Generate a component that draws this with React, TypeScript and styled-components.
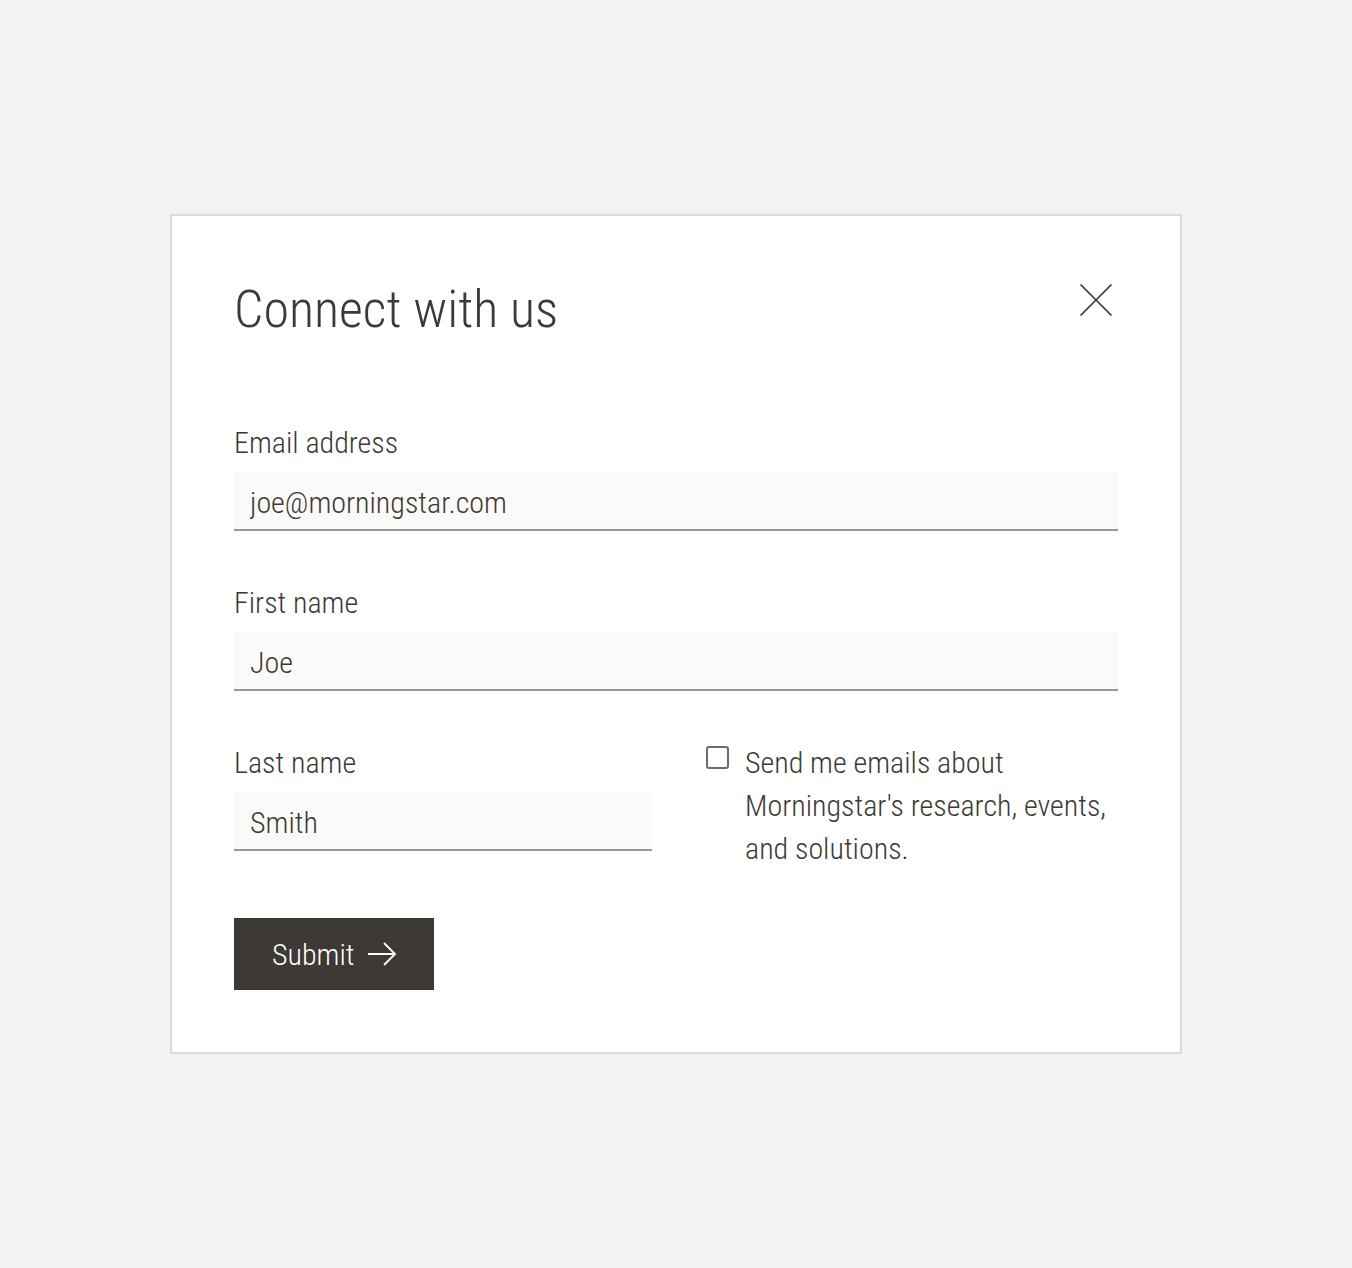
import styled, { createGlobalStyle } from "styled-components";

const GlobalStyle = createGlobalStyle`
  html, body {
    margin: 0;
    padding: 0;
    background: #f2f2f2;
  }
  body {
    font-family: "Roboto Condensed", "Open Sans", sans-serif;
    font-weight: 300;
    color: #3d3935;
  }
`;

const Page = styled.div`
  display: flex;
  align-items: center;
  justify-content: center;
  min-height: 1268px;
`;

const Card = styled.form`
  box-sizing: border-box;
  width: 1012px;
  padding: 62px;
  background: #ffffff;
  border: 2px solid #dcd9d6;
`;

const Header = styled.div`
  display: flex;
  justify-content: space-between;
  align-items: flex-start;
  margin-bottom: 83px;
`;

const Title = styled.h2`
  margin: 0;
  font-size: 52px;
  line-height: 64px;
  font-weight: 300;
  color: #3d3935;
`;

const CloseButton = styled.button`
  width: 44px;
  height: 44px;
  padding: 0;
  border: none;
  background: transparent;
  display: flex;
  align-items: center;
  justify-content: center;
  cursor: pointer;
`;

const Field = styled.div`
  display: flex;
  flex-direction: column;
  margin-bottom: 54px;
`;

const Label = styled.label`
  font-size: 30px;
  line-height: 36px;
  margin-bottom: 11px;
  color: #3d3935;
`;

const Input = styled.input`
  box-sizing: border-box;
  height: 59px;
  padding: 4px 16px 0;
  border: none;
  border-bottom: 2px solid #9b9a91;
  background: #fbfaf8;
  font-family: inherit;
  font-weight: 300;
  font-size: 30px;
  color: #3d3935;
  outline: none;
`;

const Row = styled.div`
  display: grid;
  grid-template-columns: 418px 1fr;
  column-gap: 54px;
  margin-bottom: 48px;
`;

const RowField = styled(Field)`
  margin-bottom: 0;
`;

const CheckLabel = styled.label`
  display: flex;
  align-items: flex-start;
  gap: 16px;
  margin-top: -4px;
  font-size: 30px;
  line-height: 43px;
  color: #3d3935;
  cursor: pointer;
`;

const Box = styled.span`
  flex: none;
  box-sizing: border-box;
  width: 23px;
  height: 23px;
  margin-top: 5px;
  border: 2px solid #6f6b67;
  border-radius: 3px;
  background: #fff;
`;

const SubmitButton = styled.button`
  display: flex;
  align-items: center;
  gap: 12px;
  height: 72px;
  width: 200px;
  padding: 0 0 0 38px;
  border: none;
  background: #3d3935;
  color: #ffffff;
  font-family: inherit;
  font-weight: 300;
  font-size: 30px;
  cursor: pointer;
`;

function App() {
  return (
    <>
      <GlobalStyle />
      <Page>
        <Card onSubmit={(e) => e.preventDefault()}>
          <Header>
            <Title>Connect with us</Title>
            <CloseButton type="button" aria-label="Close">
              <svg width="34" height="34" viewBox="0 0 34 34">
                <path d="M1.5 1.5 L32.5 32.5 M32.5 1.5 L1.5 32.5" stroke="#3d3935" strokeWidth="1.7" fill="none" />
              </svg>
            </CloseButton>
          </Header>
          <Field>
            <Label>Email address</Label>
            <Input defaultValue="joe@morningstar.com" />
          </Field>
          <Field>
            <Label>First name</Label>
            <Input defaultValue="Joe" />
          </Field>
          <Row>
            <RowField>
              <Label>Last name</Label>
              <Input defaultValue="Smith" />
            </RowField>
            <CheckLabel>
              <Box />
              <span>Send me emails about Morningstar's research, events, and solutions.</span>
            </CheckLabel>
          </Row>
          <SubmitButton type="submit">
            Submit
            <svg width="30" height="24" viewBox="0 0 30 24">
              <path d="M1 12 H28 M17 1 L28 12 L17 23" stroke="#ffffff" strokeWidth="1.8" fill="none" />
            </svg>
          </SubmitButton>
        </Card>
      </Page>
    </>
  );
}

export default App;
